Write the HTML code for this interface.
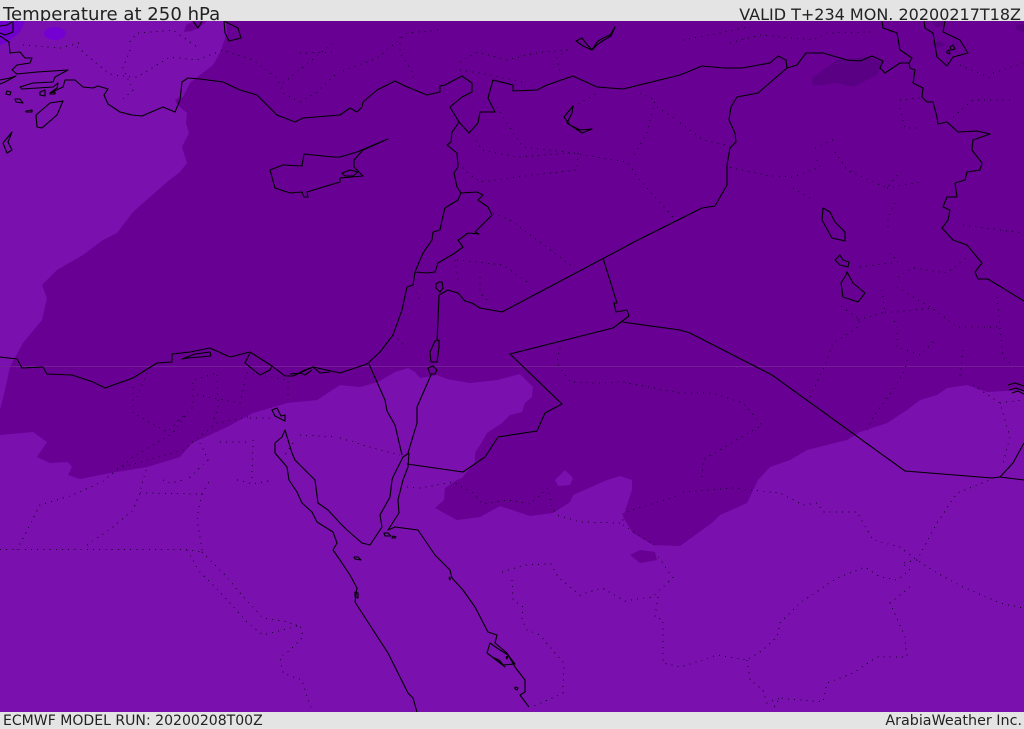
<!DOCTYPE html>
<html><head><meta charset="utf-8"><title>Temperature at 250 hPa</title>
<style>
html,body{margin:0;padding:0;background:#e4e4e4;width:1024px;height:729px;overflow:hidden}
.t{position:absolute;font-family:"DejaVu Sans","Liberation Sans",sans-serif;color:#222;white-space:nowrap;line-height:1}
svg{position:absolute;left:0;top:21px;display:block}
.c{fill:none;stroke:#000;stroke-width:1.1;stroke-linejoin:round}
.d{fill:none;stroke:#16002a;stroke-width:1;stroke-dasharray:1 5.2;shape-rendering:crispEdges}
</style></head><body>
<div class="t" style="left:3px;top:6px;font-size:18.1px">Temperature at 250 hPa</div>
<div class="t" style="right:3px;top:7px;font-size:16px">VALID T+234 MON. 20200217T18Z</div>
<div class="t" style="left:3px;top:714px;font-size:14.05px">ECMWF MODEL RUN: 20200208T00Z</div>
<div class="t" style="right:2px;top:714px;font-size:14.3px">ArabiaWeather Inc.</div>
<svg width="1024" height="691" viewBox="0 21 1024 691" xmlns="http://www.w3.org/2000/svg">
<rect x="0" y="21" width="1024" height="691" fill="#7a10ad"/>
<path fill="#7200cc" d="M0 21H25L20 32 8 42 0 45Z"/>
<ellipse cx="55" cy="33.500" rx="11" ry="6.500" fill="#7400d2"/>
<path fill="#670093" d="M226 21 227 33 220 53 213 65 200 75 190 83 183 97 175 100 180 107 187 113 186 123 189 133 182 147 187 163 180 172 167 182 150 197 133 212 117 233 103 240 83 255 57 270 42 285 47 298 42 320 23 343 10 367 5 390 0 410V435L33 432 47 442 37 457 50 463 68 462 72 467 68 475 80 479 110 473 147 467 180 457 192 443 227 427 253 413 287 403 317 400 340 385 360 387 378 382 395 372 408 368 415 372 420 378 437 375 447 379 470 383 497 380 520 374 533 387 532 397 525 403 522 412 510 415 502 423 487 433 482 442 475 453 475 462 462 478 457 480 445 488 444 500 435 508 457 520 480 517 500 506 530 516 553 513 570 502 573 495 607 480 620 476 632 480 632 490 623 517 633 533 653 545 680 546 713 522 720 515 747 503 758 480 770 467 790 460 807 450 827 445 847 440 860 432 887 423 907 410 920 400 937 395 947 388 967 385 987 392 1024 390V21Z"/>
<path fill="#670093" d="M184 32 186 25 195 21H207L200 27 192 31ZM175 100 180 97 183 103 178 106Z"/>
<path fill="#7a10ad" d="M555 480 565 470 573 478 570 485 558 486Z"/>
<path fill="#670093" d="M630 555 640 550 655 552 657 560 640 563Z"/>
<path fill="#5a0084" d="M812 78 837 60 867 57 883 63 877 75 853 87 837 83 813 86ZM932 21H945L943 27 935 27ZM932 44 940 41 945 45 938 48ZM1015 25 1024 24V32L1017 30Z"/>
<rect x="0" y="366" width="1024" height="1" fill="#741e98"/>

<g class="c">
<path d="M13 21 13 32 5 35 0 33M0 36 9 42 10 53 20 52 25 58 32 58 30 63 17 65 12 70 17 74 37 72 68 70 55 77 53 82 33 83 20 87 22 89 53 87 58 83 57 88 50 93 63 87 65 80 75 80 83 87 93 88 98 86 108 89 104 95 108 104 120 112 132 115 142 116 163 107 175 112 180 100 182 82 188 78 200 79 223 82 240 90 257 95 270 108 277 115 295 122 303 118 340 115 350 108 357 112 362 107 363 102 377 90 395 81 405 86 427 95 440 92 440 86 445 85 462 76 472 83 472 92 462 97 450 107 459 122 455 128 452 132 451 142 447 145 457 153 458 167 454 173 457 187 461 193 458 200 445 208 442 220 440 230 433 232 432 240 423 253 415 272 413 285 407 287 402 310 393 335 380 352 367 364 340 373 313 367 293 376 285 376 272 366 250 352 230 357 210 348 190 352 172 354 172 362 157 363 133 378 105 388 93 382 72 375 47 374 43 367 22 368 17 359 0 357"/>
<path d="M182 359 195 354 210 352 211 356 200 357 188 358ZM250 353 245 363 260 375 270 370 272 366M293 376 305 370 313 367 320 373 330 372M290 374 300 373 305 375 312 370"/>
<path d="M0 26 7 25 12 22M0 80 10 78 16 76 5 82 0 84M7 91 11 92 10 95 6 94ZM15 99 20 99 23 103 16 102ZM26 111 32 110 32 112 26 112ZM40 92 45 90 45 96 40 95ZM50 93 55 92 55 94 50 94Z"/>
<path d="M63 101 50 103 36 115 37 127 42 128 57 115Z"/>
<path d="M12 132 3 143 7 153 12 150 8 142Z"/>
<path d="M270 170 283 165 302 166 304 154 333 157 340 157 357 152 388 139 363 150 354 160 354 167 363 176 352 177 340 178 340 182 320 188 307 192 308 197 304 197 302 192 290 193 275 188Z"/>
<path d="M342 173 350 170 358 172 353 176 345 176Z"/>
<path d="M224 21 238 28 241 38 229 41 225 33Z"/>
<path d="M193 21 198 28 202 21"/>
<path d="M459 122 469 133 478 123 480 112 495 112 488 98 493 80 513 85 513 91 537 90 547 85 573 76 597 87 623 89 680 75 702 66 725 68 742 68 770 63 778 56 786 60 787 68 797 65 806 53 823 53 847 60 860 61 872 56 883 61 880 68 885 73 900 63 909 63 910 68 915 70 913 83 923 88 922 97 927 102 933 102 937 117 938 124 947 122 958 132 977 131 990 134 973 140 972 150 982 163 980 170 967 172 965 180 955 183 957 197 947 197 943 207 950 210 948 220 942 228 953 240 967 245 982 263 975 272 978 279 988 279 1024 301"/>
<path d="M882 21 883 28 897 33 900 50 912 58 909 63"/>
<path d="M924 21 925 28 933 33 937 57 947 66 953 57 968 53 960 40 943 32 945 21"/>
<path d="M950 47 953 45 955 49 951 50ZM947 51 949 50 950 54 947 53Z"/>
<path d="M576 41 582 38 585 42 592 50 597 42 603 38 610 35 615 27 611 36 604 40 598 44 592 50 583 46Z"/>
<path d="M573 106 564 117 570 125 580 130 592 129 582 133 567 123 572 113Z"/>
<path d="M787 68 758 93 737 97 731 107 729 120 735 133 736 142 730 148 727 165 727 185 715 206 702 208 680 219 638 240 502 312 480 308 472 303 465 301 458 293 448 290 439 295 438 320 437 340"/>
<path d="M461 193 477 192 483 195 478 200 488 207 492 215 475 232 479 234 468 233 460 239 458 240 463 247 455 253 438 263 435 272 427 273 415 272"/>
<path d="M439 282 442 282 443 288 440 292 436 288 436 284Z"/>
<path d="M439 340 435 341 430 352 431 362 437 362 439 347ZM428 368 433 366 437 370 435 374 430 374Z"/>
<path d="M431 375 417 407 417 423 408 453"/>
<path d="M369 364 385 400 387 411 395 425 402 455"/>
<path d="M603 258 617 303 614 303 616 312 627 310 629 316 613 328 510 354 562 404 545 413 537 431 498 437 485 457 463 472 407 464"/>
<path d="M622 322 680 330 690 333 772 375 905 471 992 478 1000 477 1013 463 1024 443M1000 477 1024 480"/>
<path d="M409 453 403 457 393 477 392 480 390 497 380 515 382 527 370 545 362 543 347 530 340 523 328 510 318 503 315 480 295 460 292 453 285 430 282 437 275 443 275 453 287 467 289 480 297 492 302 503 312 512 317 522 333 532 337 543 333 550 340 560 350 575 357 588 355 602 375 633 388 653 408 693 413 698 417 712"/>
<path d="M409 453 408 467 403 480 398 500 399 513 388 530 395 527 418 530 435 555 450 570 452 578 463 590 475 607 488 632 497 635 495 643 507 653 515 667 525 680 525 692 520 695 529 707"/>
<path d="M272 410 277 408 281 416 285 415 285 421 275 416Z"/>
<path d="M384 533 388 533 391 536 385 536ZM393 536 396 537 395 538 392 538ZM354 557 358 557 361 560 355 559ZM355 592 358 593 358 598 355 597ZM515 687 518 688 517 690 515 689ZM449 578 450 577 450 580Z"/>
<path d="M490 643 487 653 503 665 515 664 508 655 497 648ZM492 657 505 667 499 660ZM506 657 508 656 507 659Z"/>
<path d="M823 208 822 220 832 238 845 241 845 232 835 222 830 212Z"/>
<path d="M835 260 840 255 843 260 849 262 848 267 840 265Z"/>
<path d="M847 272 846 275 841 283 843 297 858 302 865 293 853 283Z"/>
<path d="M1008 385 1015 383 1024 386M1009 390 1016 388 1024 391M1012 393 1018 391 1024 394"/>
</g>

<g class="d">
<path d="M0 549.500H187L202 552M17 550 40 505 73 495 102 482 107 478 133 457 173 433 187 413"/>
<path d="M87 545 113 527 133 510 140 493 143 480 147 467M140 493 202 494 197 517 202 550M202 494 210 480"/>
<path d="M187 550 200 572 220 592 248 623 263 635 283 630 300 625 303 637 290 650 280 657 283 673 302 680 308 700 313 712"/>
<path d="M202 552 227 577 240 593 263 618 287 622 302 627"/>
<path d="M502 572 525 565 551 564 558 577 580 595 602 588 625 601 652 597 673 578 657 555"/>
<path d="M512 580 513 600 523 607 522 620 527 630 540 635 555 653 564 663 563 693 532 707"/>
<path d="M658 597 655 617 663 620 663 663 680 667 703 660 717 655 747 660 763 650 777 637 780 623 800 603 837 578 865 567 880 577 897 580 910 570 902 563 917 560 937 523 957 493 990 480"/>
<path d="M910 587 890 603 905 637 907 657 877 657 853 673 827 683 823 702 780 698 772 710"/>
<path d="M747 660 750 680 763 690 767 703 780 698"/>
<path d="M683 492 733 488 780 493 803 505 817 503 823 512 857 512 873 540 900 547 917 560 937 573 963 587 1000 603 1023 608"/>
<path d="M407 487 420 488 453 482 473 493 483 504 507 500 530 504 548 488 552 507 557 515 580 522 623 523 623 513 680 495M623 525 655 545"/>
<path d="M340 438 373 448 400 455"/>
<path d="M560 347 557 363 570 382 600 383 623 382 680 393 713 393 743 403 762 425 723 448 703 460 702 480"/>
<path d="M810 397 825 365 833 343 857 328 860 320 837 303M858 320 885 312 882 290M885 312 897 312 932 308 957 327 1000 327M963 350 960 377M933 342 920 355 897 347 897 327 893 318M907 360 905 370 893 390 873 417 867 430"/>
<path d="M898 277 913 268 947 273 967 257M860 267 898 262 887 250M897 287 923 303 932 308M997 297 1003 357 1010 363M973 385 1000 403 1010 437 1002 467M1000 403 1024 400"/>
<path d="M683 40 720 33 747 27M730 43 760 35 813 40 827 33 873 32M900 100 920 98M900 108 905 128 920 128M953 117 973 100 1013 100M993 73 1023 63M960 65 990 78M963 225 1023 233"/>
<path d="M815 148 837 138M817 160 820 167 793 177 770 176 728 167M835 152 847 170 887 188 900 172M887 188 920 182M895 203 888 217 888 227M793 188 813 200M680 123 703 140 730 146"/>
<path d="M343 71 377 58 407 33 440 30M400 37 400 53 413 73 413 80M460 62 477 52 507 60 540 52 567 50 557 58 560 72M460 70 490 75 527 83"/>
<path d="M497 107 513 133 523 147 573 153 627 162 640 180 673 217M578 153 577 170 533 175 480 182 468 173 458 163M473 135 482 150 517 157 573 153M573 107 597 93M640 93 655 100 647 133 633 157M657 107 677 120"/>
<path d="M493 213 510 220 537 240 573 267M457 260 503 265 527 282M480 277 480 293 487 300M455 260 458 280M413 287 420 300M393 335 407 348"/>
<path d="M23 45 60 48 83 42M77 47 107 72 113 75 137 77 170 57 197 60 223 50 253 60 277 78 283 93 300 102 317 92 337 73M130 42 137 33 173 30 197 47M130 50 123 68 133 90 120 102M283 83 333 43M300 53 337 52"/>
<path d="M133 387 133 413 167 432 193 407 193 380 217 373 218 407 213 422M197 395 240 403 247 373 288 380 288 400M147 373 137 397M248 417 217 423 183 450 113 470"/>
<path d="M250 418 273 418M253 440 252 480M220 442 248 442M200 443 208 460 187 480M300 435 337 437M293 443 285 455M163 480 170 483 183 480M237 480 253 484 273 480"/>
</g>
</svg>
</body></html>
